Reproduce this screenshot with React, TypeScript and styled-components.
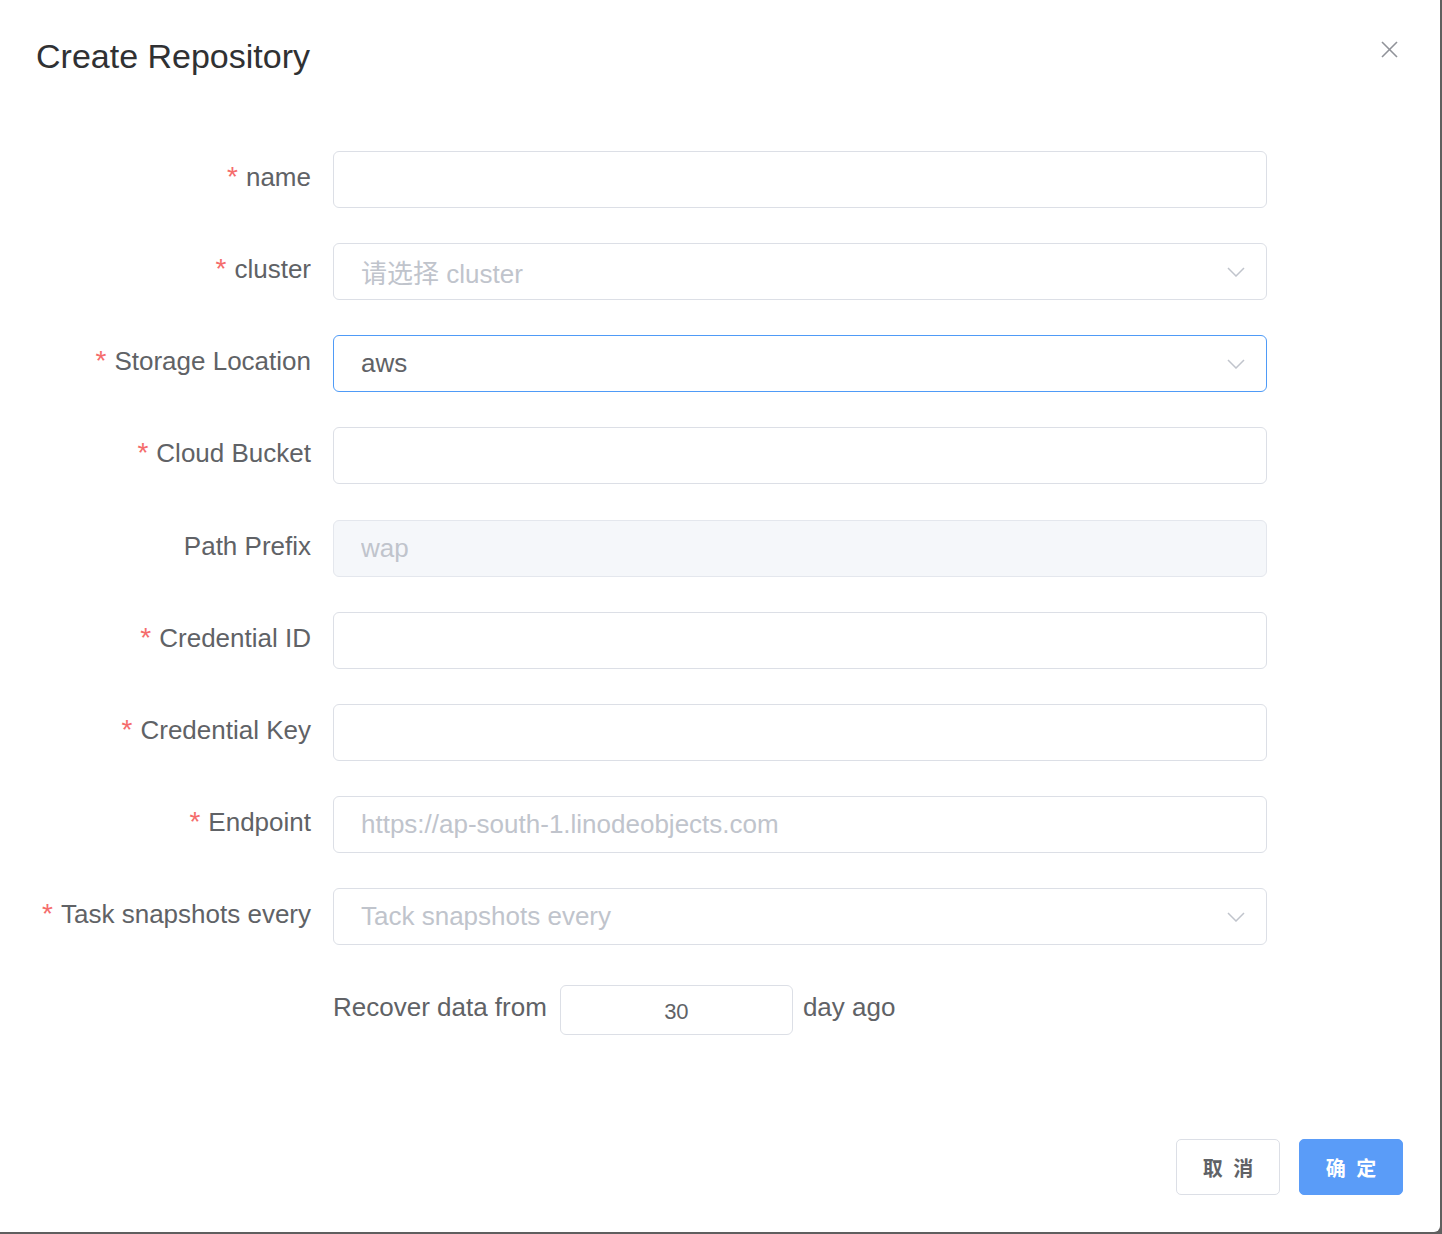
import React from 'react';
import styled, { createGlobalStyle, css } from 'styled-components';

const GlobalStyle = createGlobalStyle`
  html, body {
    margin: 0;
    padding: 0;
    background: #5f5f5f;
  }

  body {
    font-family: 'Liberation Sans', Arial, 'Noto Sans CJK SC', sans-serif;
    color: #606266;
  }

  * {
    box-sizing: border-box;
  }
`;

const Dialog = styled.div`
  position: relative;
  width: 1440px;
  height: 1232px;
  background: #fff;
  border-bottom-right-radius: 6px;
  display: flex;
  flex-direction: column;
`;

const Header = styled.div`
  padding: 36px 36px 0;
`;

const Title = styled.h2`
  margin: 0;
  font-size: 34px;
  line-height: 40px;
  font-weight: 400;
  color: #303133;
`;

const CloseButton = styled.button`
  position: absolute;
  top: 41px;
  right: 42px;
  width: 17px;
  height: 17px;
  padding: 0;
  border: none;
  background: transparent;
  cursor: pointer;
  display: flex;

  svg {
    display: block;
  }
`;

const Form = styled.form`
  margin-top: 75px;
`;

const FormRow = styled.div`
  display: flex;
  align-items: center;
  margin-bottom: 35.15px;
`;

const Label = styled.label`
  width: 333px;
  padding-right: 22px;
  margin-bottom: 5px;
  text-align: right;
  font-size: 26px;
  line-height: 32px;
  color: #606266;
  white-space: nowrap;
`;

const Required = styled.span`
  color: #f56c6c;
  margin-right: 8px;
  font-size: 28px;
`;

const fieldBase = css`
  width: 934px;
  height: 57px;
  border: 1px solid #dcdfe6;
  border-radius: 6px;
  padding: 0 27px;
  font-family: 'Liberation Sans', Arial, 'Noto Sans CJK SC', sans-serif;
  font-size: 26px;
  color: #606266;
  background: #fff;
`;

const TextInput = styled.input`
  ${fieldBase}
  outline: none;

  &::placeholder {
    color: #c0c4cc;
  }

  &:disabled {
    background: #f5f7fa;
    border-color: #e4e7ed;
    color: #c0c4cc;
  }
`;

const SelectBox = styled.div<{ $focused?: boolean }>`
  ${fieldBase}
  display: flex;
  align-items: center;
  justify-content: space-between;
  padding-right: 21px;
  border-color: ${(p) => (p.$focused ? '#4f9bf7' : '#dcdfe6')};
  cursor: pointer;
`;

const SelectText = styled.span<{ $placeholder?: boolean }>`
  color: ${(p) => (p.$placeholder ? '#c0c4cc' : '#606266')};
`;

const RecoverRow = styled.div`
  display: flex;
  align-items: center;
  margin-left: 333px;
  margin-top: 40px;
  font-size: 26px;
  color: #606266;
`;

const RecoverText = styled.span`
  margin-bottom: 5px;
`;

const NumberInput = styled.input`
  width: 233px;
  height: 50px;
  margin: 0 10px 0 13px;
  border: 1px solid #dcdfe6;
  border-radius: 6px;
  text-align: center;
  font-family: 'Liberation Sans', Arial, sans-serif;
  font-size: 22px;
  color: #606266;
  outline: none;
  padding: 4px 0 0;
`;

const Footer = styled.div`
  margin-top: auto;
  display: flex;
  justify-content: flex-end;
  gap: 19px;
  padding: 0 37px 37px 0;
`;

const Button = styled.button<{ $primary?: boolean }>`
  width: 104px;
  height: 56px;
  border-radius: 5px;
  font-family: 'Noto Sans CJK SC', sans-serif;
  font-size: 20px;
  font-weight: 600;
  word-spacing: 6px;
  cursor: pointer;
  border: 1px solid ${(p) => (p.$primary ? '#5a9cf8' : '#dcdfe6')};
  background: ${(p) => (p.$primary ? '#5a9cf8' : '#fff')};
  color: ${(p) => (p.$primary ? '#fff' : '#606266')};
`;

const Chevron = () => (
  <svg width="18" height="10" viewBox="0 0 18 10" fill="none">
    <polyline points="1,1 9,9 17,1" stroke="#c0c4cc" strokeWidth="1.5" />
  </svg>
);

const CloseIcon = () => (
  <svg width="17" height="17" viewBox="0 0 17 17" fill="none">
    <line x1="1" y1="1" x2="16" y2="16" stroke="#909399" strokeWidth="1.6" />
    <line x1="16" y1="1" x2="1" y2="16" stroke="#909399" strokeWidth="1.6" />
  </svg>
);

type Field =
  | { kind: 'input'; label: string; required?: boolean; placeholder?: string; value?: string; disabled?: boolean }
  | { kind: 'select'; label: string; required?: boolean; placeholder?: string; value?: string; focused?: boolean };

const fields: Field[] = [
  { kind: 'input', label: 'name', required: true },
  { kind: 'select', label: 'cluster', required: true, placeholder: '请选择 cluster' },
  { kind: 'select', label: 'Storage Location', required: true, value: 'aws', focused: true },
  { kind: 'input', label: 'Cloud Bucket', required: true },
  { kind: 'input', label: 'Path Prefix', placeholder: 'wap', disabled: true },
  { kind: 'input', label: 'Credential ID', required: true },
  { kind: 'input', label: 'Credential Key', required: true },
  { kind: 'input', label: 'Endpoint', required: true, placeholder: 'https://ap-south-1.linodeobjects.com' },
  { kind: 'select', label: 'Task snapshots every', required: true, placeholder: 'Tack snapshots every' },
];

const App: React.FC = () => {
  return (
    <>
      <GlobalStyle />
      <Dialog>
        <Header>
          <Title>Create Repository</Title>
        </Header>
        <CloseButton type="button" aria-label="close">
          <CloseIcon />
        </CloseButton>
        <Form onSubmit={(e) => e.preventDefault()}>
          {fields.map((f) => (
            <FormRow key={f.label}>
              <Label>
                {f.required && <Required>*</Required>}
                {f.label}
              </Label>
              {f.kind === 'input' ? (
                <TextInput
                  placeholder={f.placeholder}
                  defaultValue={f.value}
                  disabled={f.disabled}
                />
              ) : (
                <SelectBox $focused={f.focused}>
                  <SelectText $placeholder={!f.value}>{f.value || f.placeholder}</SelectText>
                  <Chevron />
                </SelectBox>
              )}
            </FormRow>
          ))}
          <RecoverRow>
            <RecoverText>Recover data from</RecoverText>
            <NumberInput defaultValue="30" />
            <RecoverText>day ago</RecoverText>
          </RecoverRow>
        </Form>
        <Footer>
          <Button type="button">取 消</Button>
          <Button type="button" $primary>
            确 定
          </Button>
        </Footer>
      </Dialog>
    </>
  );
};

export default App;
